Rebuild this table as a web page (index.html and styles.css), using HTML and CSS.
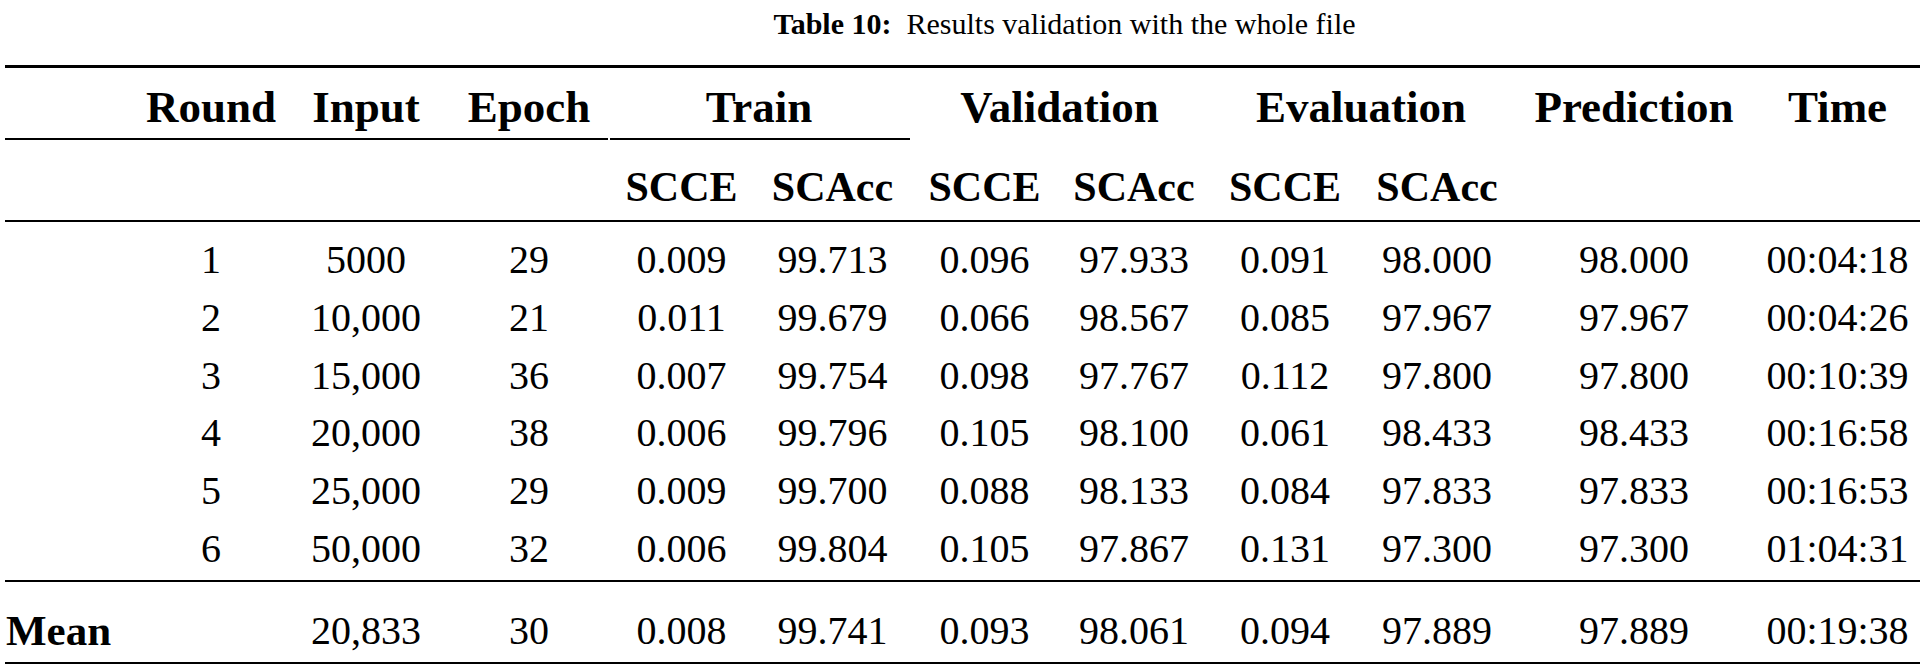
FILE: index.html
```html
<!DOCTYPE html>
<html lang="en">
<head>
<meta charset="utf-8">
<title>Table 10</title>
<link rel="stylesheet" href="styles.css">
</head>
<body>
<div class="page">
  <div class="caption"><b>Table 10:</b>&nbsp; Results validation with the whole file</div>
  <table class="results">
    <colgroup>
      <col class="c-label"><col class="c-round"><col class="c-input"><col class="c-epoch">
      <col class="c-tr1"><col class="c-tr2"><col class="c-va1"><col class="c-va2">
      <col class="c-ev1"><col class="c-ev2"><col class="c-pred"><col class="c-time">
    </colgroup>
    <thead>
      <tr class="h1">
        <th class="rule"></th>
        <th class="rule">Round</th>
        <th class="rule">Input</th>
        <th class="rule">Epoch</th>
        <th class="cmid" colspan="2">Train</th>
        <th class="norule" colspan="2">Validation</th>
        <th class="norule" colspan="2">Evaluation</th>
        <th class="norule">Prediction</th>
        <th class="norule">Time</th>
      </tr>
      <tr class="h2">
        <th></th><th></th><th></th><th></th>
        <th>SCCE</th><th>SCAcc</th>
        <th>SCCE</th><th>SCAcc</th>
        <th>SCCE</th><th>SCAcc</th>
        <th></th><th></th>
      </tr>
    </thead>
    <tbody>
      <tr class="first"><td></td><td>1</td><td>5000</td><td>29</td><td>0.009</td><td>99.713</td><td>0.096</td><td>97.933</td><td>0.091</td><td>98.000</td><td>98.000</td><td>00:04:18</td></tr>
      <tr><td></td><td>2</td><td>10,000</td><td>21</td><td>0.011</td><td>99.679</td><td>0.066</td><td>98.567</td><td>0.085</td><td>97.967</td><td>97.967</td><td>00:04:26</td></tr>
      <tr><td></td><td>3</td><td>15,000</td><td>36</td><td>0.007</td><td>99.754</td><td>0.098</td><td>97.767</td><td>0.112</td><td>97.800</td><td>97.800</td><td>00:10:39</td></tr>
      <tr><td></td><td>4</td><td>20,000</td><td>38</td><td>0.006</td><td>99.796</td><td>0.105</td><td>98.100</td><td>0.061</td><td>98.433</td><td>98.433</td><td>00:16:58</td></tr>
      <tr><td></td><td>5</td><td>25,000</td><td>29</td><td>0.009</td><td>99.700</td><td>0.088</td><td>98.133</td><td>0.084</td><td>97.833</td><td>97.833</td><td>00:16:53</td></tr>
      <tr class="last"><td></td><td>6</td><td>50,000</td><td>32</td><td>0.006</td><td>99.804</td><td>0.105</td><td>97.867</td><td>0.131</td><td>97.300</td><td>97.300</td><td>01:04:31</td></tr>
    </tbody>
    <tfoot>
      <tr class="mean"><th>Mean</th><td></td><td>20,833</td><td>30</td><td>0.008</td><td>99.741</td><td>0.093</td><td>98.061</td><td>0.094</td><td>97.889</td><td>97.889</td><td>00:19:38</td></tr>
    </tfoot>
  </table>
</div>
</body>
</html>
```

FILE: styles.css
```css
html, body {
  margin: 0;
  padding: 0;
  background: #ffffff;
}

body {
  font-family: "Liberation Serif", "Times New Roman", serif;
  color: #000000;
}

.page {
  padding: 0 5px;
}

.caption {
  height: 48px;
  line-height: 48px;
  margin-bottom: 17px;
  font-size: 30px;
  text-align: center;
  padding-left: 204px;
  white-space: nowrap;
}

.results {
  width: 1915px;
  table-layout: fixed;
  border-collapse: separate;
  border-spacing: 0;
}

.c-label { width: 135px; }
.c-round { width: 142px; }
.c-input { width: 168px; }
.c-epoch { width: 158px; }
.c-tr1 { width: 147px; }
.c-tr2 { width: 155px; }
.c-va1 { width: 149px; }
.c-va2 { width: 150px; }
.c-ev1 { width: 152px; }
.c-ev2 { width: 152px; }
.c-pred { width: 242px; }
.c-time { width: 165px; }

.results th,
.results td {
  padding: 0;
  text-align: center;
  white-space: nowrap;
}

.results th {
  font-weight: 700;
  font-size: 42px;
  line-height: 50px;
}

.results td {
  font-size: 40px;
  line-height: 57.8px;
}

/* header row 1 */
.h1 th {
  font-size: 45px;
  border-top: 3px solid #000;
  padding-top: 14px;
  padding-bottom: 6px;
}

.h1 th.rule {
  border-bottom: 2px solid #000;
}

.h1 th.norule {
  border-bottom: 2px solid transparent;
}

.h1 th.cmid {
  border-bottom: 2px solid transparent;
  background-image: linear-gradient(#000, #000);
  background-repeat: no-repeat;
  background-origin: border-box;
  background-position: 2px 100%;
  background-size: calc(100% - 2px) 2px;
}

/* header row 2 */
.h2 th {
  padding-top: 22px;
  padding-bottom: 8px;
  border-bottom: 2px solid #000;
}

/* body */
tbody tr.first td {
  padding-top: 9px;
}

tbody tr.last td {
  padding-bottom: 2px;
}

/* mean row */
.mean th,
.mean td {
  border-top: 2px solid #000;
  border-bottom: 2px solid #000;
  padding-top: 20px;
  padding-bottom: 2px;
}

.mean th {
  font-size: 43px;
  text-align: left;
  padding-left: 1px;
  line-height: 57.8px;
}
```
